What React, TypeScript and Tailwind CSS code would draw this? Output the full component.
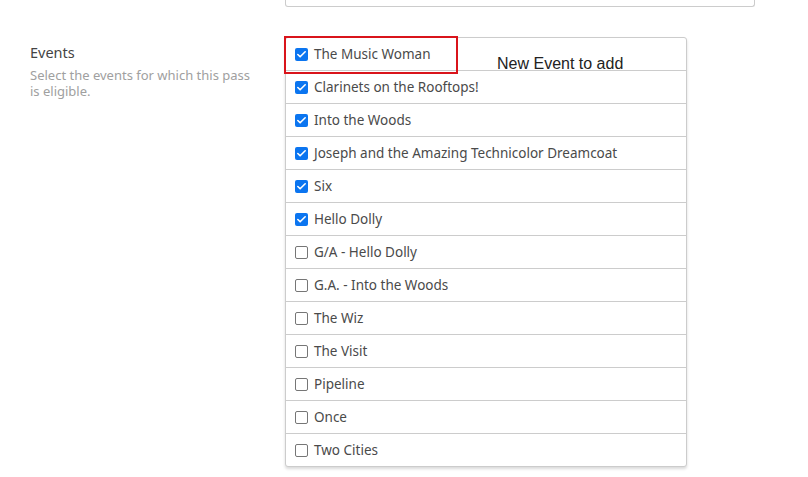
import { Check } from 'lucide-react';

const events = [
  { name: 'The Music Woman', checked: true },
  { name: 'Clarinets on the Rooftops!', checked: true },
  { name: 'Into the Woods', checked: true },
  { name: 'Joseph and the Amazing Technicolor Dreamcoat', checked: true },
  { name: 'Six', checked: true },
  { name: 'Hello Dolly', checked: true },
  { name: 'G/A - Hello Dolly', checked: false },
  { name: 'G.A. - Into the Woods', checked: false },
  { name: 'The Wiz', checked: false },
  { name: 'The Visit', checked: false },
  { name: 'Pipeline', checked: false },
  { name: 'Once', checked: false },
  { name: 'Two Cities', checked: false },
];

const Box = ({ checked }: { checked: boolean }) =>
  checked ? (
    <span className="w-[13px] h-[13px] rounded-[2px] bg-[#0b75f0] flex items-center justify-center shrink-0">
      <Check size={11} strokeWidth={3.5} className="text-white" />
    </span>
  ) : (
    <span className="w-[13px] h-[13px] rounded-[2px] border border-[#767676] bg-white shrink-0" />
  );

export default function App() {
  return (
    <div className="w-[808px] h-[477px] bg-white overflow-hidden font-['Noto_Sans',sans-serif] text-[#333]">
      <div className="flex">
        <div className="w-[285px] shrink-0" />
        <div className="w-[470px] h-[7px] border border-t-0 border-[#ccc] rounded-b-[3px]" />
      </div>

      <div className="flex mt-[30px]">
        <div className="w-[285px] shrink-0 pl-[30px] pr-[30px] pt-[5px]">
          <div className="text-[14.5px] leading-[20px] text-[#444]">Events</div>
          <div className="text-[13px] leading-[16px] text-[#a0a0a0] mt-[5px]">
            Select the events for which this pass is eligible.
          </div>
        </div>

        <div className="relative">
          <div className="w-[402px] border border-[#ccc] rounded-[3px] shadow-[0_2px_3px_rgba(0,0,0,0.15)] bg-white">
            {events.map((e, i) => (
              <div
                key={e.name}
                className={`flex items-center gap-[6px] pl-[9px] text-[13.5px] text-[#4a4a4a] ${i > 0 ? 'h-[33px] border-t border-[#ccc]' : 'h-[32px]'}`}
              >
                <Box checked={e.checked} />
                <span>{e.name}</span>
              </div>
            ))}
          </div>
          {/* highlight around the newly added event */}
          <div className="absolute left-[-1px] top-[-1px] w-[174px] h-[38px] border-2 border-[#d9141b] pointer-events-none" />
          <div className="absolute left-[212px] top-[17px] text-[16px] leading-[20px] text-[#222] font-['Liberation_Sans',Arial,sans-serif]">
            New Event to add
          </div>
        </div>
      </div>
    </div>
  );
}
